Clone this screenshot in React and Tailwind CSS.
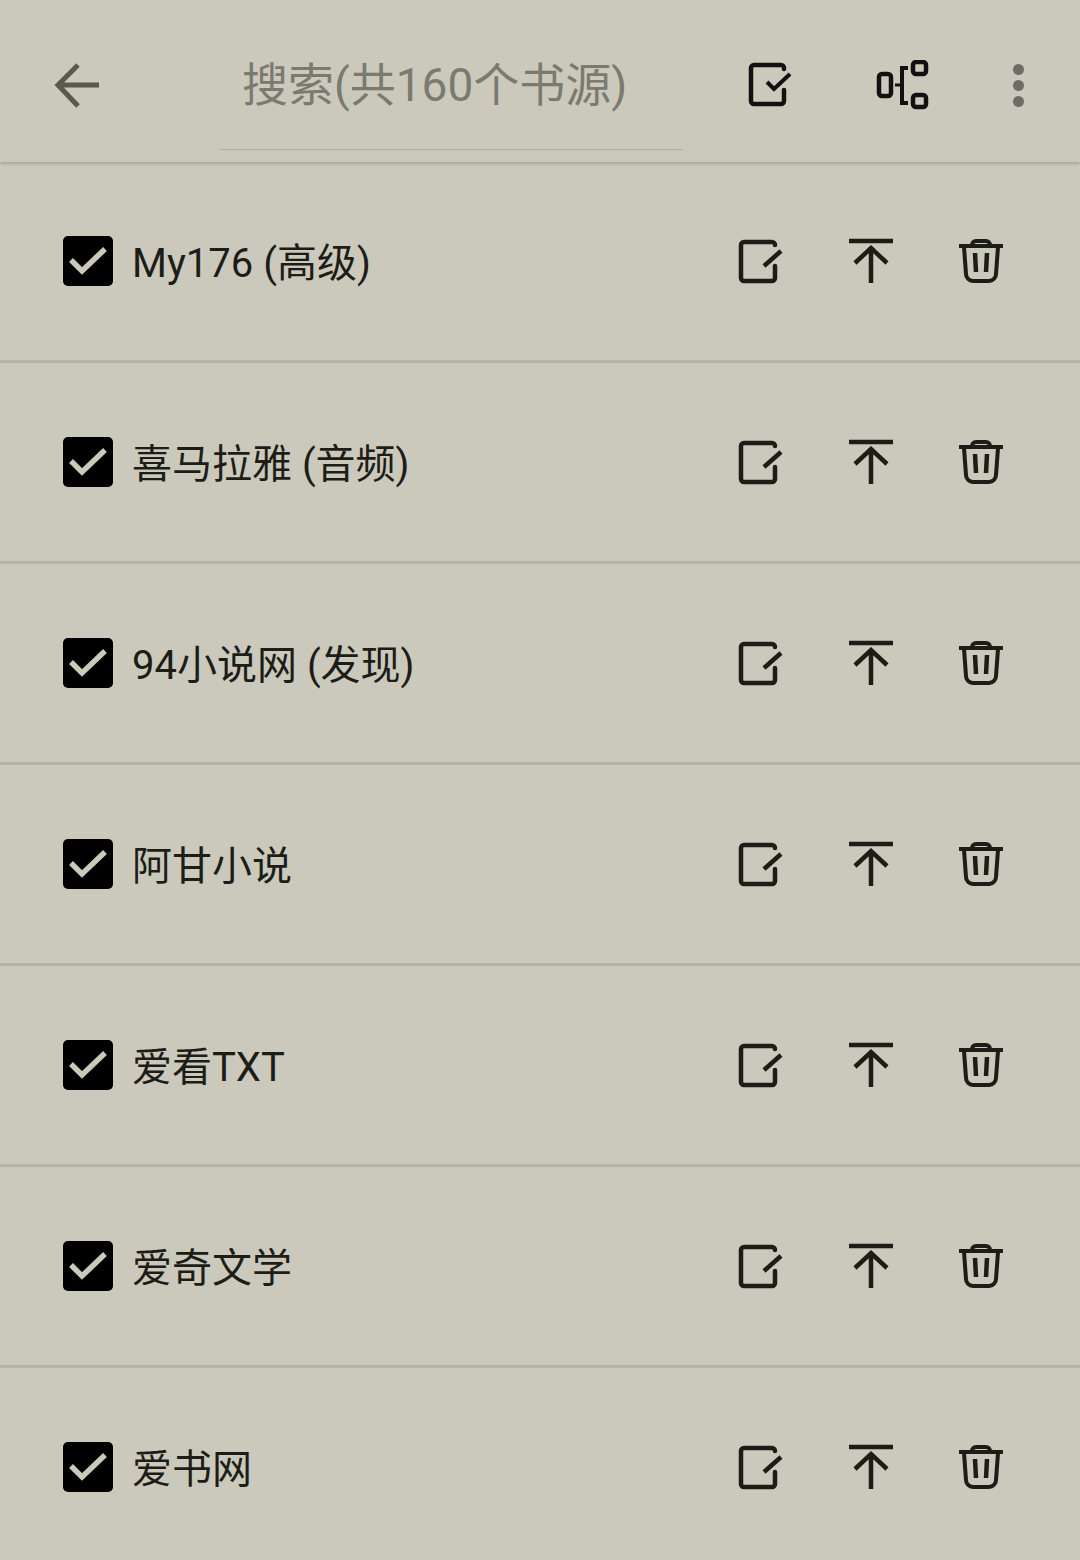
import React from "react";

const sources = [
  "My176 (高级)",
  "喜马拉雅 (音频)",
  "94小说网 (发现)",
  "阿甘小说",
  "爱看TXT",
  "爱奇文学",
  "爱书网",
];

const BackIcon = () => (
  <svg width="50" height="50" viewBox="0 0 50 50" fill="none" stroke="#5a594f" strokeWidth="5">
    <path d="M45 25H5M24 5L4 25L24 46" />
  </svg>
);

const SelectIcon = () => (
  <svg width="50" height="50" viewBox="1 1 50 50" fill="none" stroke="#111" strokeWidth="4.5" strokeLinecap="round">
    <path d="M40 10V9a3 3 0 0 0-3-3H10a3 3 0 0 0-3 3V42a3 3 0 0 0 3 3H37a3 3 0 0 0 3-3V31" />
    <path d="M23 23L30 30L46 15" strokeLinecap="butt" strokeWidth="4" />
  </svg>
);

const GroupIcon = () => (
  <svg width="56" height="50" viewBox="0 1 56 50" fill="none" stroke="#111" strokeWidth="4.5">
    <rect x="4" y="15" width="12" height="22" rx="3" />
    <rect x="38" y="3" width="13" height="12" rx="3" />
    <rect x="38" y="36" width="13" height="12" rx="3" />
    <path d="M33 9H27V44H33" strokeWidth="4" />
    <path d="M20 26H27" strokeWidth="3" />
  </svg>
);

const MoreIcon = () => (
  <div className="flex flex-col gap-[5px]">
    <div className="w-[11px] h-[11px] rounded-full bg-[#6f6e64]" />
    <div className="w-[11px] h-[11px] rounded-full bg-[#6f6e64]" />
    <div className="w-[11px] h-[11px] rounded-full bg-[#6f6e64]" />
  </div>
);

const EditIcon = () => (
  <svg width="50" height="50" viewBox="1 0 50 50" fill="none" stroke="#1d1d17" strokeWidth="4.5" strokeLinecap="round">
    <path d="M40 9a3 3 0 0 0-3-3H9a3 3 0 0 0-3 3V42a3 3 0 0 0 3 3H37a3 3 0 0 0 3-3V30" />
    <path d="M29 30L46 15" strokeLinecap="butt" />
  </svg>
);

const TopIcon = () => (
  <svg width="50" height="50" viewBox="0 0 50 50" fill="none" stroke="#1d1d17" strokeWidth="4.5">
    <path d="M3 5H47M25 47V12M9 27L25 12L41 27" />
  </svg>
);

const TrashIcon = () => (
  <svg width="50" height="50" viewBox="0 0 50 50" fill="none" stroke="#1d1d17" strokeWidth="4" strokeLinejoin="round">
    <path d="M3 10H47" />
    <path d="M16 10V9a4 4 0 0 1 4-4H30a4 4 0 0 1 4 4V10" />
    <path d="M8 11L10 38a7 7 0 0 0 7 7H33a7 7 0 0 0 7-7L42 11" />
    <path d="M19 17L20 36M31 17L30 36" strokeWidth="4.5" />
  </svg>
);

const SourceRow = ({ name }) => (
  <div className="flex items-center h-[201px] shrink-0 border-b-[3px] border-[#b4b3a5] pl-[63px] pr-[74px]">
    <div className="flex items-center justify-center w-[50px] h-[50px] rounded-[5px] bg-black">
      <svg width="50" height="50" viewBox="0 0 50 50" fill="none" stroke="#cbc9bc" strokeWidth="5.5">
        <path d="M8 24L19 35L42 13" />
      </svg>
    </div>
    <span className="ml-[19px] pt-[5px] flex-1 text-[40px] leading-[50px] text-[#1d1d17]">{name}</span>
    <div className="flex items-center gap-[60px]">
      <EditIcon />
      <TopIcon />
      <TrashIcon />
    </div>
  </div>
);

export default function App() {
  return (
    <div
      className="flex flex-col h-[1560px] overflow-hidden bg-[#cbc9bc]"
      style={{ fontFamily: 'Roboto, "Noto Sans CJK SC", sans-serif' }}
    >
      <div className="relative z-10 flex items-start h-[162px] shrink-0 bg-[#cbc9bc] shadow-[0_2px_3px_rgba(90,88,70,0.3)]">
        <div className="w-[220px] pl-[54px] pt-[60px]">
          <BackIcon />
        </div>
        <div className="flex items-center w-[463px] h-[150px] pt-[22px] pl-[22px] border-b border-[#aeada0] text-[46px] text-[#7b7a6e]">
          搜索(共160个书源)
        </div>
        <div className="flex items-center pt-[60px] pl-[62px]">
          <SelectIcon />
          <div className="ml-[80px]">
            <GroupIcon />
          </div>
          <div className="ml-[82px]">
            <MoreIcon />
          </div>
        </div>
      </div>
      {sources.map((name) => (
        <SourceRow key={name} name={name} />
      ))}
    </div>
  );
}
